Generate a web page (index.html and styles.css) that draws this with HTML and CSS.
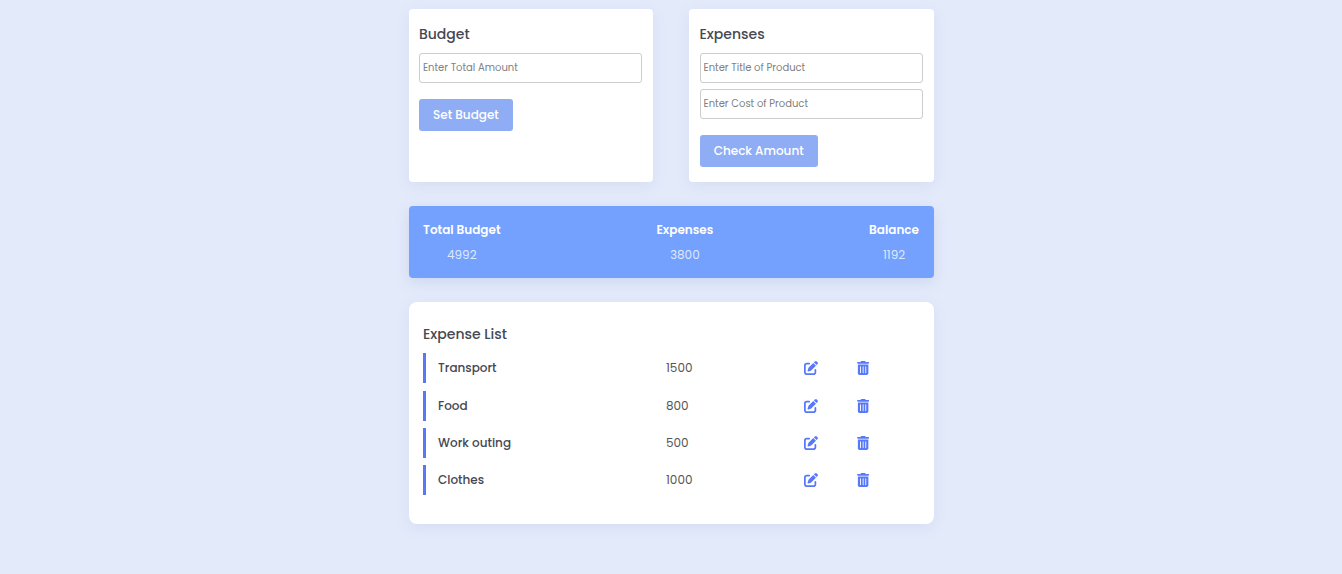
FILE: index.html
```html
<!DOCTYPE html>
<html lang="en">
<head>
  <meta charset="UTF-8">
  <title>Budget App</title>
  <link rel="stylesheet" href="styles.css">
</head>
<body>
  <svg class="sprites" width="0" height="0">
    <symbol id="icon-edit" viewBox="0 0 512 512">
      <path d="M471.6 21.7c-21.9-21.9-57.3-21.9-79.2 0L362.3 51.7l97.9 97.9 30.1-30.1c21.9-21.9 21.9-57.3 0-79.2L471.6 21.7zm-299.2 220c-6.1 6.1-10.8 13.6-13.5 21.9l-29.6 88.8c-2.9 8.6-.6 18.1 5.8 24.6s15.9 8.7 24.6 5.8l88.8-29.6c8.2-2.7 15.7-7.4 21.9-13.5L437.7 172.3 339.7 74.3 172.4 241.7zM96 64C43 64 0 107 0 160V416c0 53 43 96 96 96H352c53 0 96-43 96-96V320c0-17.7-14.3-32-32-32s-32 14.3-32 32v96c0 17.7-14.3 32-32 32H96c-17.7 0-32-14.3-32-32V160c0-17.7 14.3-32 32-32h96c17.7 0 32-14.3 32-32s-14.3-32-32-32H96z"/>
    </symbol>
    <symbol id="icon-trash" viewBox="0 0 448 512">
      <path d="M135.2 17.7C140.6 6.8 151.7 0 163.8 0H284.2c12.1 0 23.2 6.8 28.6 17.7L320 32h96c17.7 0 32 14.3 32 32s-14.3 32-32 32H32C14.3 96 0 81.7 0 64S14.3 32 32 32h96l7.2-14.3zM32 128H416V448c0 35.3-28.7 64-64 64H96c-35.3 0-64-28.7-64-64V128zm96 64c-8.8 0-16 7.2-16 16V432c0 8.8 7.2 16 16 16s16-7.2 16-16V208c0-8.8-7.2-16-16-16zm96 0c-8.8 0-16 7.2-16 16V432c0 8.8 7.2 16 16 16s16-7.2 16-16V208c0-8.8-7.2-16-16-16zm96 0c-8.8 0-16 7.2-16 16V432c0 8.8 7.2 16 16 16s16-7.2 16-16V208c0-8.8-7.2-16-16-16z"/>
    </symbol>
  </svg>

  <div class="wrapper">
    <!-- budget and expense forms -->
    <div class="forms">
      <div class="card form-card budget-card">
        <h3>Budget</h3>
        <input class="field" type="text" placeholder="Enter Total Amount">
        <button class="btn">Set Budget</button>
      </div>
      <div class="card form-card">
        <h3>Expenses</h3>
        <input class="field" type="text" placeholder="Enter Title of Product">
        <input class="field" type="text" placeholder="Enter Cost of Product">
        <button class="btn">Check Amount</button>
      </div>
    </div>

    <!-- totals -->
    <div class="summary">
      <div class="summary-col">
        <h4>Total Budget</h4>
        <span>4992</span>
      </div>
      <div class="summary-col">
        <h4>Expenses</h4>
        <span>3800</span>
      </div>
      <div class="summary-col">
        <h4>Balance</h4>
        <span>1192</span>
      </div>
    </div>

    <!-- expense list -->
    <div class="card list-card">
      <h3>Expense List</h3>
      <div class="row">
        <span class="row-title">Transport</span>
        <span class="row-cost">1500</span>
        <svg class="icon icon-edit"><use href="#icon-edit"/></svg>
        <svg class="icon icon-trash"><use href="#icon-trash"/></svg>
      </div>
      <div class="row">
        <span class="row-title">Food</span>
        <span class="row-cost">800</span>
        <svg class="icon icon-edit"><use href="#icon-edit"/></svg>
        <svg class="icon icon-trash"><use href="#icon-trash"/></svg>
      </div>
      <div class="row">
        <span class="row-title">Work outing</span>
        <span class="row-cost">500</span>
        <svg class="icon icon-edit"><use href="#icon-edit"/></svg>
        <svg class="icon icon-trash"><use href="#icon-trash"/></svg>
      </div>
      <div class="row">
        <span class="row-title">Clothes</span>
        <span class="row-cost">1000</span>
        <svg class="icon icon-edit"><use href="#icon-edit"/></svg>
        <svg class="icon icon-trash"><use href="#icon-trash"/></svg>
      </div>
    </div>
  </div>
</body>
</html>
```

FILE: styles.css
```css
* {
  box-sizing: border-box;
}

body {
  margin: 0;
  background-color: #e3eafa;
  font-family: "Poppins", "Inter", "Noto Sans", sans-serif;
  color: #454852;
}

.sprites {
  display: block;
  height: 0;
}

.wrapper {
  width: 525px;
  margin: 0 auto;
  padding-top: 9px;
  padding-bottom: 50px;
}

.forms {
  display: flex;
  justify-content: space-between;
}

.card {
  background-color: #fff;
  border-radius: 4px;
  box-shadow: 0 4px 14px rgba(120, 140, 200, 0.12);
}

.form-card {
  width: 245px;
  height: 173px;
  padding: 15px 11px 0 11px;
}

.budget-card {
  width: 244.4px;
  padding-left: 10.4px;
  padding-right: 10.8px;
}

.form-card h3 {
  margin: 0 0 9px;
  font-size: 14px;
  font-weight: 500;
  line-height: 20px;
}

.field {
  display: block;
  width: 100%;
  height: 30px;
  margin-bottom: 6px;
  padding: 0 3px;
  border: 1px solid #ccc;
  border-radius: 3px;
  font-family: inherit;
  font-size: 10px;
}

.field::placeholder {
  color: #808080;
}

.btn {
  display: block;
  height: 32px;
  margin-top: 16px;
  padding: 0 14.2px;
  border: none;
  border-radius: 3px;
  background-color: #8fadf5;
  color: #fff;
  font-family: inherit;
  font-size: 12px;
  font-weight: 500;
}

.summary {
  display: flex;
  justify-content: space-between;
  height: 72px;
  margin-top: 24px;
  padding: 14px 14.5px 0;
  background-color: #73a1fd;
  border-radius: 4px;
  box-shadow: 0 4px 14px rgba(120, 140, 200, 0.2);
  color: #fff;
}

.summary-col {
  text-align: center;
}

.summary-col h4 {
  margin: 0 0 5px;
  font-size: 12px;
  font-weight: 600;
  line-height: 20px;
}

.summary-col span {
  display: block;
  font-size: 12px;
  line-height: 20px;
  color: #dfe7fb;
}

.list-card {
  height: 222px;
  margin-top: 24px;
  padding: 22px 14.5px 0;
  border-radius: 8px;
}

.list-card h3 {
  margin: 0 0 9.2px;
  font-size: 14px;
  font-weight: 500;
  line-height: 20px;
}

.row {
  display: flex;
  align-items: center;
  height: 30px;
  margin-bottom: 7.35px;
  padding-left: 12px;
  border-left: 3px solid #5878fb;
  font-size: 12px;
}

.row-title {
  width: 228px;
  font-weight: 500;
}

.row-cost {
  width: 138px;
  color: #555;
}

.icon {
  height: 14px;
  fill: #5878fb;
}

.icon-edit {
  width: 14px;
}

.icon-trash {
  width: 12.25px;
  margin-left: 39px;
}
```
